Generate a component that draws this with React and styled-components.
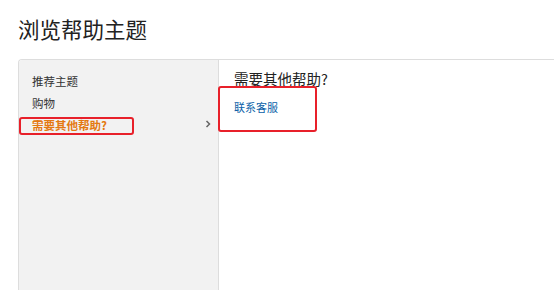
import React from "react";
import styled, { createGlobalStyle } from "styled-components";

const Global = createGlobalStyle`
  html, body { margin: 0; padding: 0; background: #fff; overflow: hidden; }
  body { font-family: "Noto Sans CJK SC", "Liberation Sans", sans-serif; color: #333; }
`;

const Page = styled.div`
  padding: 16px 0 0 18px;
  height: 290px;
  box-sizing: border-box;
  display: flex;
  flex-direction: column;
`;

const Title = styled.h1`
  margin: 0 0 17px;
  font-size: 21.5px;
  font-weight: 400;
  line-height: 26px;
  color: #222;
`;

const Panel = styled.div`
  flex: 1;
  display: flex;
  border: 1px solid #ddd;
  border-right: none;
  border-bottom: none;
  border-top-left-radius: 4px;
  overflow: hidden;
`;

const Sidebar = styled.div`
  width: 199px;
  background: #f2f2f2;
  border-right: 1px solid #ddd;
  padding-top: 10px;
  position: relative;
`;

const Item = styled.div`
  position: relative;
  display: flex;
  align-items: center;
  height: 22px;
  padding-left: 13px;
  font-size: 11.5px;
  color: ${(p) => (p.$active ? "#e47911" : "#333")};
  font-weight: ${(p) => (p.$active ? 700 : 400)};
`;

const Chevron = styled.span`
  position: absolute;
  right: 7px;
  top: 6px;
  display: flex;
`;

const Mark = styled.div`
  position: absolute;
  border: 2px solid #e8202a;
  border-radius: 3px;
  box-sizing: border-box;
  pointer-events: none;
`;

const Content = styled.div`
  flex: 1;
  padding: 9px 0 0 15px;
  position: relative;
`;

const Heading = styled.div`
  font-size: 14.5px;
  line-height: 20px;
  color: #222;
`;

const Link = styled.a`
  display: block;
  margin-top: 10px;
  font-size: 11px;
  color: #0a5fa8;
  text-decoration: none;
`;

export default function App() {
  return (
    <>
      <Global />
      <Page>
        <Title>浏览帮助主题</Title>
        <Panel>
          <Sidebar>
            <Item>推荐主题</Item>
            <Item>购物</Item>
            <Item $active>
              需要其他帮助?
              <Chevron>
                <svg width="6" height="8" viewBox="0 0 6 8">
                  <path d="M1.5 1 L4.5 4 L1.5 7" fill="none" stroke="#666" strokeWidth="1.5" />
                </svg>
              </Chevron>
            </Item>
            <Mark style={{ left: 0, top: 57, width: 115, height: 18 }} />
          </Sidebar>
          <Content>
            <Heading>需要其他帮助?</Heading>
            <Link href="#">联系客服</Link>
            <Mark style={{ left: -1, top: 26, width: 99, height: 46 }} />
          </Content>
        </Panel>
      </Page>
    </>
  );
}
